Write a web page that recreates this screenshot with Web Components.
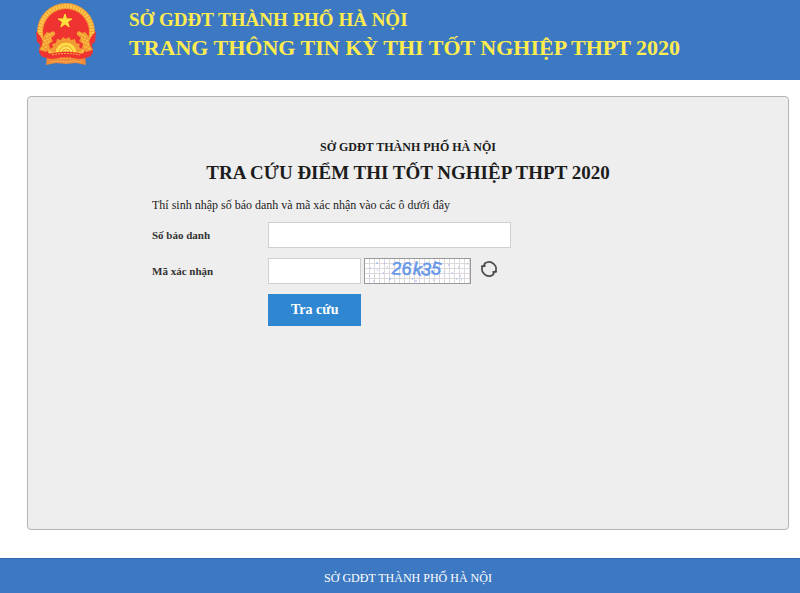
<!DOCTYPE html>
<html lang="vi">
<head>
<meta charset="utf-8">
<meta name="viewport" content="width=device-width, initial-scale=1">
<title>Tra cứu điểm thi tốt nghiệp THPT 2020</title>
<style>
	body {
		margin: 0;
		background: #fff;
		font-family: "Liberation Serif", "Times New Roman", serif;
	}
</style>
</head>
<body>
<exam-page>
	<exam-header slot="header">
		<national-emblem slot="logo"></national-emblem>
		<span slot="owner">SỞ GDĐT THÀNH PHỐ HÀ NỘI</span>
		<span slot="title">TRANG THÔNG TIN KỲ THI TỐT NGHIỆP THPT 2020</span>
	</exam-header>
	<exam-panel>
		<span slot="owner">SỞ GDĐT THÀNH PHỐ HÀ NỘI</span>
		<span slot="title">TRA CỨU ĐIỂM THI TỐT NGHIỆP THPT 2020</span>
		<lookup-form></lookup-form>
	</exam-panel>
	<exam-footer slot="footer">SỞ GDĐT THÀNH PHỐ HÀ NỘI</exam-footer>
</exam-page>

<script>
/**
 * Base class: renders getMarkup() and getStyles() into an open shadow root.
 */
class ExamElement extends HTMLElement {
	constructor () {
		super();
		this.attachShadow( { mode: 'open' } );
		this.shadowRoot.innerHTML = `<style>${ this.getStyles() }</style>${ this.getMarkup() }`;
	}
}

/**
 * Page frame: header, growing content area, footer.
 */
class ExamPage extends ExamElement {
	getStyles () {
		return `
			:host {
				display: flex;
				flex-direction: column;
				min-height: 100vh;
			}

			main {
				flex: 1;
				display: flex;
				padding: 16px 11px 28px 27px;
			}
		`;
	}

	getMarkup () {
		return `
			<slot name="header"></slot>
			<main><slot></slot></main>
			<slot name="footer"></slot>
		`;
	}
}

/**
 * Blue banner with the logo and two title lines.
 */
class ExamHeader extends ExamElement {
	getStyles () {
		return `
			:host {
				display: block;
				background: #3d79c2;
				color: #ffec4f;
			}

			header {
				display: flex;
				gap: 32px;
				min-height: 72px;
				padding: 2px 16px 6px 35px;
			}

			.titles {
				padding-top: 4px;
				font-weight: bold;
			}

			p,
			h1 {
				margin: 0;
				font-size: 19px;
				line-height: 28px;
			}

			h1 {
				font-size: 22px;
			}
		`;
	}

	getMarkup () {
		return `
			<header>
				<slot name="logo"></slot>
				<div class="titles">
					<p><slot name="owner"></slot></p>
					<h1><slot name="title"></slot></h1>
				</div>
			</header>
		`;
	}
}

/**
 * Emblem of Viet Nam.
 */
class NationalEmblem extends ExamElement {
	getStyles () {
		return `
			:host {
				display: block;
				flex: none;
			}

			svg {
				display: block;
			}
		`;
	}

	getMarkup () {
		return `
			<svg width="62" height="64" viewBox="0 0 62 64" aria-hidden="true">
				<circle cx="31" cy="30" r="29" fill="#f29a34"/>
				<circle cx="31" cy="30" r="26" fill="none" stroke="#fbc84a" stroke-width="4" stroke-dasharray="2 1"/>
				<circle cx="31" cy="30" r="23" fill="#ee3330"/>
				<path d="M30 12l1.600 4.900h5.200l-4.200 3.100 1.600 5-4.200-3.100-4.200 3.100 1.600-5-4.200-3.100h5.200z" fill="#ffe13c" stroke="#ffe13c"/>
				<path d="M1 29l5 6 8 17h34l8-17 5-6-1 11-3 2 1 9-8 3-4 4H16l-4-4-8-3 1-9-3-2z" fill="#ee3330"/>
				<path d="M12 30q3 2 6-1 3 1 2 4l-4 3 2 3-4 3 1 4-4 4-7-2 3-5 1-7 2-4z" fill="#f29a34"/>
				<path d="M50 30q-3 2-6-1-3 1-2 4l4 3-2 3 4 3-1 4 4 4 7-2-3-5-1-7-2-4z" fill="#f29a34"/>
				<path d="M11 35l7-4M9 39l7-3M8 43l7-4M7 47l6-3M51 35l-7-4M53 39l-7-3M54 43l-7-4M55 47l-6-3" stroke="#fbc548" stroke-width="1.500" stroke-dasharray="2 1"/>
				<path d="M17 50l-2-3 3-2-1-3 4-1 1-4 4 1 2-3 3 2 3-2 2 3 4-1 1 4 4 1-1 3 3 2-2 3z" fill="#f29a34"/>
				<path d="M20 51a11 11 0 0 1 22 0z" fill="#ffdc46" stroke="#f0912e"/>
				<path d="M24 51a7 7 0 0 1 14 0M27 51a4 4 0 0 1 8 0" fill="#ffe65a" stroke="#ef9a30"/>
				<path d="M12 54l7-3h24l7 3 1 9-10-2-10 1-10-1-10 2z" fill="#f08a38"/>
				<path d="M15 60l9-1 7 1 7-1 9 1" fill="none" stroke="#f8ad50"/>
				<path d="M4 48q7 5 15 3 12-3 24 0 8 2 15-3l-2 6q-6 3-11 3-14-3-28 0-5 0-11-3z" fill="#ee3330"/>
				<path d="M17 53q14-3 28 0M25 56h12" fill="none" stroke="#ffb43c" stroke-dasharray="2 1"/>
			</svg>
		`;
	}
}

/**
 * Grey rounded panel with centred headings.
 */
class ExamPanel extends ExamElement {
	getStyles () {
		return `
			:host {
				display: block;
				flex: 1;
				padding: 38px 16px 16px;
				background: #eee;
				border: 1px solid #b4b4b4;
				border-radius: 4px;
				color: #1c1c1c;
			}

			p,
			h2 {
				margin: 0;
				font-size: 12px;
				font-weight: bold;
				line-height: 24px;
				text-align: center;
			}

			h2 {
				font-size: 19px;
				line-height: 28px;
			}
		`;
	}

	getMarkup () {
		return `
			<p><slot name="owner"></slot></p>
			<h2><slot name="title"></slot></h2>
			<slot></slot>
		`;
	}
}

/**
 * Score lookup form.
 */
class LookupForm extends ExamElement {
	getStyles () {
		return `
			:host {
				display: block;
				max-width: 512px;
				margin: 8px auto 0;
			}

			p {
				margin: 0 0 7px;
				font-size: 12px;
				line-height: 20px;
			}

			form {
				display: grid;
				grid-template-columns: 116px 1fr;
				row-gap: 10px;
				align-items: center;
			}

			label {
				font-size: 11px;
				font-weight: bold;
				color: #333;
			}

			.row {
				display: flex;
				align-items: center;
				gap: 3px;
				min-height: 26px;
			}

			input {
				box-sizing: border-box;
				width: 243px;
				height: 26px;
				padding: 4px 8px;
				border: 1px solid #d0d0d0;
				background: #fff;
				font: inherit;
				font-size: 12px;
			}

			#code {
				width: 93px;
			}

			button {
				padding: 0;
				border: 0;
				background: none;
				font: inherit;
				cursor: pointer;
			}

			.refresh {
				margin-left: 6px;
				padding-bottom: 4px;
			}

			.refresh svg {
				display: block;
			}

			.submit {
				grid-column: 2;
				justify-self: start;
				padding: 0 23px;
				background: #3087d1;
				color: #fff;
				font-size: 14px;
				font-weight: bold;
				line-height: 32px;
			}
		`;
	}

	getMarkup () {
		return `
			<p>Thí sinh nhập số báo danh và mã xác nhận vào các ô dưới đây</p>
			<form>
				<label for="candidate">Số báo danh</label>
				<div class="row"><input id="candidate" type="text"></div>
				<label for="code">Mã xác nhận</label>
				<div class="row">
					<input id="code" type="text" autocomplete="off">
					<captcha-image code="26k35"></captcha-image>
					<button class="refresh" type="button" aria-label="Đổi mã">
						<svg width="18" height="18" viewBox="0 0 18 18" fill="none" stroke="#4c4c4c" stroke-width="1.700">
							<path d="M5 3.200A7 7 0 0 1 15 12.500M13 14.800A7 7 0 0 1 3 5.500"/>
							<path d="M12.500 11h4.500v1.500l-2-.200-1 3h-1.500zM5.500 7H1V5.500l2 .200 1-3h1.500z" fill="#4c4c4c" stroke="none"/>
						</svg>
					</button>
				</div>
				<button class="submit" type="submit">Tra cứu</button>
			</form>
		`;
	}

	connectedCallback () {
		this.shadowRoot.querySelector( 'form' ).addEventListener( 'submit', ( e ) => e.preventDefault() );
	}
}

/**
 * Verification code on a ruled, speckled background.
 */
class CaptchaImage extends ExamElement {
	getStyles () {
		return `
			:host {
				display: block;
				border: 1px solid #999;
				background: #fff;
			}

			svg {
				display: block;
			}

			text {
				font: 18px "Liberation Sans", Arial, sans-serif;
				fill: #6496ea;
				stroke: #6496ea;
				stroke-width: 0.5px;
			}
		`;
	}

	getMarkup () {
		return `
			<svg width="105" height="24" viewBox="0 0 105 24" role="img">
				<defs>
					<pattern id="grid" width="5" height="5" patternUnits="userSpaceOnUse">
						<path d="M4.500 0v5M0 4.500h5" stroke="#dcd8dc"/>
					</pattern>
				</defs>
				<rect width="105" height="24" fill="url(#grid)"/>
				<path d="M5 9h1M11 4h2M19 4h1M4 17h1M8 22h1M12 11h1M18 14h1M24 20h2M22 8h1M47 20h1M50 22h2M83 6h1M87 14h1M93 8h1M95 17h1M91 20h1M102 5h1M96 21h1M79 13h1M75 5h1M68 21h1" stroke="#86aef2" stroke-width="1"/>
				<text x="26 36 47 55 65" y="15 15 15 15 14" rotate="6 8 12 14 16"></text>
			</svg>
		`;
	}

	connectedCallback () {
		this.shadowRoot.querySelector( 'text' ).textContent = this.getAttribute( 'code' );
	}
}

/**
 * Blue footer bar.
 */
class ExamFooter extends ExamElement {
	getStyles () {
		return `
			:host {
				display: block;
				border-top: 1px solid #2e6bb3;
				background: #3d79c2;
				color: #fff;
			}

			footer {
				padding: 5px 0 1px 16px;
				font-size: 12px;
				line-height: 28px;
				text-align: center;
			}
		`;
	}

	getMarkup () {
		return '<footer><slot></slot></footer>';
	}
}

customElements.define( 'exam-page', ExamPage );
customElements.define( 'exam-header', ExamHeader );
customElements.define( 'national-emblem', NationalEmblem );
customElements.define( 'exam-panel', ExamPanel );
customElements.define( 'captcha-image', CaptchaImage );
customElements.define( 'lookup-form', LookupForm );
customElements.define( 'exam-footer', ExamFooter );
</script>
</body>
</html>
